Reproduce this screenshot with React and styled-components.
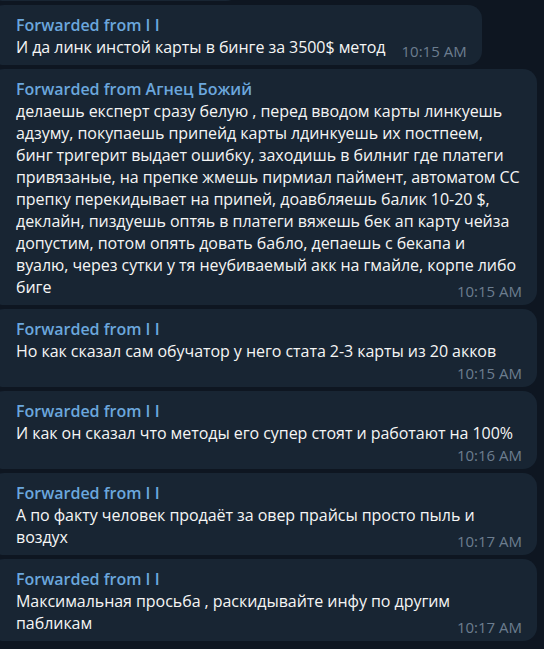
import React from 'react'
import styled, { createGlobalStyle } from 'styled-components'

const GlobalStyle = createGlobalStyle`
    * {
        box-sizing: border-box;
    }
    html, body {
        margin: 0;
        padding: 0;
        background-color: #0e1621;
        overflow: hidden;
    }
`

// the \n keeps the line breaks of the original client
const messages = [
    { from: 'I I', text: 'И да линк инстой карты в бинге за 3500$ метод', time: '10:15 AM' },
    {
        from: 'Агнец Божий',
        text: 'делаешь експерт сразу белую , перед вводом карты линкуешь адзуму, покупаешь припейд карты лдинкуешь их постпеем, бинг тригерит выдает ошибку, заходишь в билниг где платеги привязаные, на препке жмешь пирмиал паймент, автоматом СС препку перекидывает на припей, доавбляешь балик 10-20 $, деклайн, пиздуешь оптяь в платеги вяжешь бек ап карту чейза допустим, потом опять довать бабло, депаешь с бекапа и\nвуалю, через сутки у тя неубиваемый акк на гмайле, корпе либо биге',
        time: '10:15 AM',
    },
    { from: 'I I', text: 'Но как сказал сам обучатор у него стата 2-3 карты из 20 акков', time: '10:15 AM', ownLine: true },
    { from: 'I I', text: 'И как он сказал что методы его супер стоят и работают на 100%', time: '10:16 AM', ownLine: true },
    { from: 'I I', text: 'А по факту человек продаёт за овер прайсы просто пыль и воздух', time: '10:17 AM' },
    { from: 'I I', text: 'Максимальная просьба , раскидывайте инфу по другим пабликам', time: '10:17 AM' },
]

function App() {
    return (
        <>
            <GlobalStyle />
            <Chat>
                <History>
                    <Bubble $stub />
                    {messages.map((m, i) => (
                        <Bubble key={i}>
                            <Forwarded>Forwarded from {m.from}</Forwarded>
                            <Text>
                                {m.text}
                                <Time $ownLine={m.ownLine}>{m.time}</Time>
                            </Text>
                        </Bubble>
                    ))}
                </History>
            </Chat>
        </>
    )
}

export default App

const Chat = styled.div`
    width: 544px;
    height: 649px;
    overflow: hidden;
    background-color: #0e1621;
    font-family: "Open Sans", "Noto Sans", sans-serif;
`

const History = styled.div`
    display: flex;
    flex-direction: column;
    align-items: flex-start;
    gap: 4px;
    margin-top: -39px;
`

const Bubble = styled.div`
    margin-left: -10px;
    max-width: 547px;
    min-height: ${props => props.$stub ? '40px' : 'auto'};
    width: ${props => props.$stub ? '250px' : 'auto'};
    padding: 9px 15px 0 26px;
    background-color: #182533;
    border-radius: 14px;
    display: flow-root;
`

const Forwarded = styled.div`
    color: #6ba7dd;
    font-weight: 600;
    font-size: 16px;
    line-height: 22px;
    white-space: nowrap;
`

const Text = styled.div`
    color: #f5f5f5;
    font-size: 16px;
    line-height: 22px;
    letter-spacing: -0.05px;
    white-space: pre-line;
    display: flow-root;
`

const Time = styled.span`
    float: right;
    margin-left: 16px;
    margin-top: ${props => props.$ownLine ? '3px' : '7px'};
    margin-bottom: 6px;
    color: #6c7d8f;
    font-size: 15px;
    line-height: 16px;
    letter-spacing: 0;
    white-space: nowrap;
`
